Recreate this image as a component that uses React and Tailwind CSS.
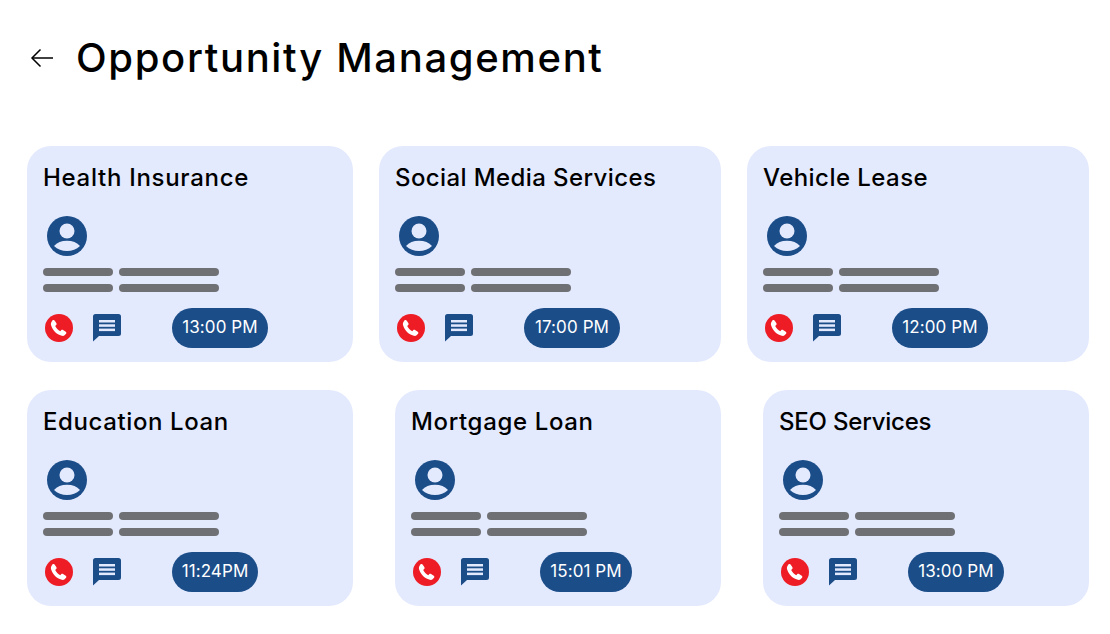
const rows = [
  {
    gap: 'gap-[26px]',
    mt: 'mt-[63px]',
    cards: [
      { title: 'Health Insurance', time: '13:00 PM', width: 'w-[326px]', pill: 'w-[96px]', tracking: 'tracking-[0.7px]' },
      { title: 'Social Media Services', time: '17:00 PM', width: 'w-[342px]', pill: 'w-[96px]', tracking: 'tracking-[0.4px]' },
      { title: 'Vehicle Lease', time: '12:00 PM', width: 'w-[342px]', pill: 'w-[96px]', tracking: 'tracking-[0.45px]' },
    ],
  },
  {
    gap: 'gap-[42px]',
    mt: 'mt-[28px]',
    cards: [
      { title: 'Education Loan', time: '11:24PM', width: 'w-[326px]', pill: 'w-[86px]', tracking: 'tracking-[0.6px]' },
      { title: 'Mortgage Loan', time: '15:01 PM', width: 'w-[326px]', pill: 'w-[92px]', tracking: 'tracking-[0.65px]' },
      { title: 'SEO Services', time: '13:00 PM', width: 'w-[326px]', pill: 'w-[96px]', tracking: 'tracking-[-0.2px]' },
    ],
  },
];

function BackArrow() {
  return (
    <svg width="24" height="24" viewBox="0 0 24 24" fill="none" stroke="#000" strokeWidth="1.5" className="shrink-0">
      <path d="M23 12H2" />
      <path d="M10.5 3.5L2 12l8.5 8.5" />
    </svg>
  );
}

function Avatar() {
  return (
    <svg width="42" height="42" viewBox="0 0 42 42" className="block ml-[3px]">
      <circle cx="21" cy="21" r="20" fill="#1b4d89" />
      <circle cx="21" cy="16" r="7.5" fill="#e4eafe" />
      <path d="M8 31C11 27.5 15.5 25.8 21 25.8S31 27.5 34 31C30.5 34.2 26 36 21 36S11.5 34.2 8 31Z" fill="#e4eafe" />
    </svg>
  );
}

function PhoneIcon() {
  return (
    <svg width="28" height="28" viewBox="0 0 28 28" className="block shrink-0">
      <circle cx="14" cy="14" r="14" fill="#ee1c25" />
      <path
        transform="translate(-1.9 -1.9) scale(1.14)"
        d="M8.3 7.2c.6-.5 1.4-.4 1.8.2l1.6 2.4c.3.5.2 1.1-.2 1.5l-.9.9c.9 2 2.5 3.6 4.5 4.5l.9-.9c.4-.4 1-.5 1.5-.2l2.4 1.6c.6.4.7 1.2.2 1.8l-1 1.1c-.7.7-1.7 1-2.7.7C11.6 19.4 8.6 16.4 7 11.6c-.3-1-.1-2 .3-2.9z"
        fill="#fff"
      />
    </svg>
  );
}

function ChatIcon() {
  return (
    <svg width="28" height="28" viewBox="0 0 28 28" className="block shrink-0">
      <path d="M2.5 0H25.5A2.5 2.5 0 0 1 28 2.5V19.5A2.5 2.5 0 0 1 25.5 22H6L0 27.5V2.5A2.5 2.5 0 0 1 2.5 0Z" fill="#1b4d89" />
      <rect x="6" y="6" width="16" height="2.5" fill="#e4eafe" />
      <rect x="6" y="10.3" width="16" height="2.5" fill="#e4eafe" />
      <rect x="6" y="14.6" width="16" height="2.5" fill="#e4eafe" />
    </svg>
  );
}

function Card({ title, time, width, pill, tracking }) {
  return (
    <div className={`${width} h-[216px] shrink-0 rounded-[24px] bg-[#e4eafe] pl-4 pt-[14px]`}>
      <h2 className={`text-[24px] leading-[36px] font-medium text-black ${tracking}`}>{title}</h2>
      <div className="mt-[19px]">
        <Avatar />
      </div>
      <div className="mt-[11px] flex flex-col gap-2">
        {[0, 1].map((i) => (
          <div key={i} className="flex gap-[6px]">
            <div className="w-[70px] h-2 rounded-full bg-[#6f7073]" />
            <div className="w-[100px] h-2 rounded-full bg-[#6f7073]" />
          </div>
        ))}
      </div>
      <div className="mt-4 flex items-center h-10">
        <div className="ml-[2px]">
          <PhoneIcon />
        </div>
        <div className="ml-[20px]">
          <ChatIcon />
        </div>
        <div className={`${pill} ml-[51px] h-10 rounded-full bg-[#1b4d89] flex items-center justify-center text-[17px] tracking-[0.1px] text-white`}>
          {time}
        </div>
      </div>
    </div>
  );
}

export default function App() {
  return (
    <div className="w-[1110px] h-[634px] bg-white overflow-hidden pl-[27px] pt-[30px] font-['Inter',sans-serif]">
      <div className="flex items-center h-[53px]">
        <div className="ml-[3px] mt-[2px]">
          <BackArrow />
        </div>
        <h1 className="ml-[22px] mt-[2px] text-[40px] leading-[53px] font-medium text-black tracking-[1.65px]">Opportunity Management</h1>
      </div>
      {rows.map((row) => (
        <div key={row.mt} className={`flex ${row.gap} ${row.mt}`}>
          {row.cards.map((card) => (
            <Card key={card.title} {...card} />
          ))}
        </div>
      ))}
    </div>
  );
}
